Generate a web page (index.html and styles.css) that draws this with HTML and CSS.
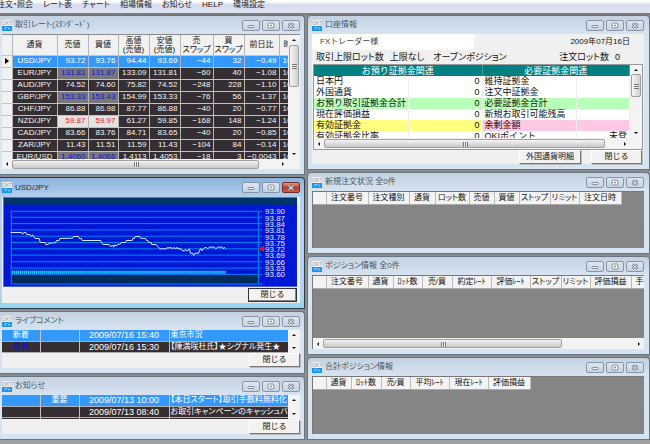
FILE: index.html
```html
<!DOCTYPE html>
<html lang="ja">
<head>
<meta charset="utf-8">
<title>FX取引</title>
<link rel="stylesheet" href="styles.css">
</head>
<body>
<svg width="0" height="0" class="defs" aria-hidden="true">
  <symbol id="logo" viewBox="0 0 10 11">
    <rect width="10" height="11" fill="#eef1f4"/>
    <text x="0" y="5" font-size="5" fill="#8c98a4" font-family="Liberation Sans">OKT</text>
    <rect y="6" width="10" height="5" fill="#1c93ea"/>
    <path d="M3 9.500V7.500H5M6 7.500L8 9.500M8 7.500L6 9.500" stroke="#bfe2fb" stroke-width=".8" fill="none"/>
  </symbol>
  <symbol id="min" viewBox="0 0 18 11"><rect x="5.500" y="5.500" width="7" height="2.500" rx="1" fill="#fff" stroke="#6f7780"/></symbol>
  <symbol id="max" viewBox="0 0 18 11"><rect x="5.500" y="2.500" width="7" height="6" rx="1" fill="#fff" stroke="#6f7780"/><rect x="8" y="4.500" width="2" height="2" fill="#6f7780"/></symbol>
  <symbol id="close" viewBox="0 0 18 11"><path d="M6 3l6 5.500M12 3l-6 5.500" stroke="#6f7780" stroke-width="3"/><path d="M6 3l6 5.500M12 3l-6 5.500" stroke="#fff" stroke-width="1.200"/></symbol>
</svg>
<nav class="menu">
  <a href="#">注文・照会</a><a href="#">レート表</a><a href="#">チャート</a><a href="#">相場情報</a><a href="#">お知らせ</a><a href="#">HELP</a><a href="#">環境設定</a>
</nav>
<main class="desktop">
  <div class="column left">
    <section class="window">
      <header class="title"><svg class="logo"><use href="#logo"/></svg><h2>取引レート(ｽﾀﾝﾀﾞｰﾄﾞ)</h2>
        <button class="ctl" aria-label="最小化"><svg><use href="#min"/></svg></button><button class="ctl" aria-label="最大化"><svg><use href="#max"/></svg></button><button class="ctl" aria-label="閉じる"><svg><use href="#close"/></svg></button></header>
      <div class="client rates">
        <div class="row">
          <div class="clip rates-view">
            <table class="rate-table">
              <colgroup><col class="w10"><col class="w45"><col class="w31"><col class="w30"><col class="w31"><col class="w31"><col class="w33"><col class="w31"><col class="w35"><col class="w31"></colgroup>
              <thead><tr><th></th><th>通貨</th><th>売値</th><th>買値</th><th>高値<br>(売値)</th><th>安値<br>(売値)</th><th>売<br>スワップ</th><th>買<br>スワップ</th><th>前日比</th><th class="start">時刻</th></tr></thead>
              <tbody>
                <tr class="selected"><th><i class="pointer"></i></th><td>USD/JPY</td><td>93.72</td><td>93.76</td><td>94.44</td><td>93.69</td><td>−44</td><td>32</td><td>−0.49</td><td>16:</td></tr>
                <tr><th></th><td>EUR/JPY</td><td class="down">131.81</td><td class="down">131.87</td><td>133.09</td><td>131.81</td><td>−60</td><td>40</td><td>−1.08</td><td>16:</td></tr>
                <tr><th></th><td>AUD/JPY</td><td>74.52</td><td>74.60</td><td>75.82</td><td>74.52</td><td>−248</td><td>228</td><td>−1.10</td><td>16:</td></tr>
                <tr><th></th><td>GBP/JPY</td><td class="down">153.33</td><td class="down">153.43</td><td>154.99</td><td>153.33</td><td>−76</td><td>56</td><td>−1.37</td><td>16:</td></tr>
                <tr><th></th><td>CHF/JPY</td><td>86.88</td><td>86.98</td><td>87.77</td><td>86.88</td><td>−40</td><td>20</td><td>−0.77</td><td>16:</td></tr>
                <tr><th></th><td>NZD/JPY</td><td class="up">59.87</td><td class="up">59.97</td><td>61.27</td><td>59.85</td><td>−168</td><td>148</td><td>−1.24</td><td>16:</td></tr>
                <tr><th></th><td>CAD/JPY</td><td>83.66</td><td>83.76</td><td>84.71</td><td>83.65</td><td>−40</td><td>20</td><td>−0.85</td><td>16:</td></tr>
                <tr><th></th><td>ZAR/JPY</td><td>11.43</td><td>11.51</td><td>11.59</td><td>11.43</td><td>−104</td><td>84</td><td>−0.14</td><td>16:</td></tr>
                <tr><th></th><td>EUR/USD</td><td class="down">1.4060</td><td class="down">1.4066</td><td>1.4113</td><td>1.4053</td><td>−18</td><td>3</td><td>−0.0043</td><td>16:</td></tr>
              </tbody>
            </table>
          </div>
          <div class="vbar"><i class="arrow up-arrow"></i><i class="thumb rates-thumb"></i><i class="arrow down-arrow"></i></div>
        </div>
        <div class="hbar with-grip"><i class="arrow left-arrow"></i><i class="track"><i class="thumb wide"></i></i><i class="arrow right-arrow"></i></div>
      </div>
    </section>

    <section class="window active">
      <header class="title"><svg class="logo"><use href="#logo"/></svg><h2>USD/JPY</h2>
        <button class="ctl" aria-label="最小化"><svg><use href="#min"/></svg></button><button class="ctl" aria-label="最大化"><svg><use href="#max"/></svg></button><button class="ctl red" aria-label="閉じる"><svg><use href="#close"/></svg></button></header>
      <div class="client">
        <svg class="chart" viewBox="9 66 885 270" role="img" aria-label="USD/JPY チャート">
          <defs><pattern id="ticks" width="6" height="10" patternUnits="userSpaceOnUse"><rect width="3" height="10" fill="#29cfff"/></pattern></defs>
          <rect x="9" y="66" width="885" height="270" fill="#0018d6"/>
          <rect x="9" y="69" width="885" height="20" fill="#003366"/>
          <rect x="34" y="300" width="744" height="28" fill="#002c5c"/>
          <path d="M32 109H789M32 127H789M32 146H789M32 165H789M32 184H789M32 203H789M32 222H789M32 241H789M32 261H789M32 280H789M32 299H789M32 328H789M34 109V328M778 109V328" stroke="#0484f4" stroke-width="3" fill="none"/>
          <rect x="34" y="288" width="646" height="9" fill="#0878ea"/><rect x="34" y="288" width="646" height="9" fill="url(#ticks)"/>
          <polyline fill="none" stroke="#dfe3ff" stroke-width="3" points="32,173 65,173 68,178 71,173 78,173 80,179 90,179 94,184 99,180 102,186 106,191 118,191 121,203 135,203 138,209 145,209 148,204 156,206 158,204 167,204 170,197 178,197 180,191 218,190 221,185 236,185 238,191 245,191 247,197 303,197 306,203 310,209 328,209 332,215 340,211 342,217 346,210 350,214 353,209 362,208 365,203 378,203 380,197 398,197 400,190 405,191 407,185 420,185 423,190 438,191 441,197 445,197 448,203 455,203 457,209 470,209 474,215 482,222 500,222 502,219 518,219 520,222 523,218 530,222 533,217 536,222 545,222 549,228 556,228 558,224 563,229 570,222 573,235 580,235 583,242 587,235 598,235 602,223 606,222 608,228 612,222 620,217 625,222 630,217 645,217 650,222 655,217 668,217 672,222 675,217 680,222"/>
          <path d="M778 222L795 213V231Z" fill="#f01010"/>
          <g class="prices"><text x="798" y="118">93.90</text><text x="798" y="137">93.87</text><text x="798" y="156">93.84</text><text x="798" y="175">93.81</text><text x="798" y="194">93.78</text><text x="798" y="213">93.75</text><text x="798" y="232">93.72</text><text x="798" y="251">93.69</text><text x="798" y="270">93.66</text><text x="798" y="289">93.63</text><text x="798" y="308">93.60</text></g>
          <path d="M10.500 336V67.500H894" fill="none" stroke="#777" stroke-width="3"/>
        </svg>
        <div class="actions"><button class="btn default">閉じる</button></div>
      </div>
    </section>

    <section class="window">
      <header class="title"><svg class="logo"><use href="#logo"/></svg><h2>ライブコメント</h2>
        <button class="ctl" aria-label="最小化"><svg><use href="#min"/></svg></button><button class="ctl" aria-label="最大化"><svg><use href="#max"/></svg></button><button class="ctl" aria-label="閉じる"><svg><use href="#close"/></svg></button></header>
      <div class="client comments">
        <div class="row">
          <div class="clip">
            <table class="news">
              <colgroup><col class="w38"><col class="w39"><col class="w90"><col></colgroup>
              <tbody>
                <tr class="selected"><td>新着</td><td></td><td>2009/07/16 15:40</td><td>東京市況</td></tr>
                <tr><td class="fresh">新着</td><td></td><td>2009/07/16 15:30</td><td>【陳満咲杜氏】★シグナル発生★</td></tr>
              </tbody>
            </table>
          </div>
          <div class="vbar"><i class="arrow up-arrow"></i><i class="arrow down-arrow"></i></div>
        </div>
        <div class="actions"><button class="btn">閉じる</button></div>
      </div>
    </section>

    <section class="window">
      <header class="title"><svg class="logo"><use href="#logo"/></svg><h2>お知らせ</h2>
        <button class="ctl" aria-label="最小化"><svg><use href="#min"/></svg></button><button class="ctl" aria-label="最大化"><svg><use href="#max"/></svg></button><button class="ctl" aria-label="閉じる"><svg><use href="#close"/></svg></button></header>
      <div class="client notices">
        <div class="row">
          <div class="clip notice-view">
            <table class="news">
              <colgroup><col class="w38"><col class="w39"><col class="w90"><col></colgroup>
              <tbody>
                <tr class="selected"><td></td><td>重要</td><td>2009/07/13 10:00</td><td>【本日スタート】取引手数料無料化</td></tr>
                <tr><td></td><td></td><td>2009/07/13 08:40</td><td>お取引キャンペーンのキャッシュバック</td></tr>
                <tr><td></td><td></td><td></td><td></td></tr>
              </tbody>
            </table>
          </div>
          <div class="vbar"><i class="arrow up-arrow"></i><i class="arrow down-arrow"></i></div>
        </div>
        <div class="actions"><button class="btn">閉じる</button></div>
      </div>
    </section>
  </div>

  <div class="column right">
    <section class="window">
      <header class="title"><svg class="logo"><use href="#logo"/></svg><h2>口座情報</h2>
        <button class="ctl" aria-label="最小化"><svg><use href="#min"/></svg></button><button class="ctl" aria-label="最大化"><svg><use href="#max"/></svg></button><button class="ctl" aria-label="閉じる"><svg><use href="#close"/></svg></button></header>
      <div class="client account">
        <div class="owner"><span class="name">FXトレーダー様</span><span class="date">2009年07月16日</span></div>
        <div class="limits"><span>取引上限ロット数</span><span>上限なし</span><span class="open">オープンポジション</span><span class="lots">注文ロット数</span><span>0</span></div>
        <div class="margin-box">
          <div class="row">
            <div class="clip margin-view">
              <table class="margin">
                <colgroup><col class="w94"><col class="w74"><col class="w94"><col></colgroup>
                <thead><tr><th colspan="2">お預り証拠金関連</th><th colspan="2">必要証拠金関連</th></tr></thead>
                <tbody>
                  <tr><td>日本円</td><td>0</td><td>維持証拠金</td><td></td></tr>
                  <tr><td>外国通貨</td><td>0</td><td>注文中証拠金</td><td></td></tr>
                  <tr class="green"><td>お預り取引証拠金合計</td><td>0</td><td>必要証拠金合計</td><td></td></tr>
                  <tr><td>現在評価損益</td><td>0</td><td>新規お取引可能残高</td><td></td></tr>
                  <tr><td class="yellow">有効証拠金</td><td class="yellow">0</td><td class="pink">余剰金額</td><td class="pink"></td></tr>
                  <tr><td>有効証拠金比率</td><td>0</td><td>OKIポイント</td><td>未登</td></tr>
                </tbody>
              </table>
            </div>
            <div class="vbar"><i class="arrow up-arrow"></i><i class="thumb margin-thumb"></i><i class="arrow down-arrow"></i></div>
          </div>
          <div class="hbar with-grip"><i class="arrow left-arrow"></i><i class="track"><i class="thumb wider"></i></i><i class="arrow right-arrow"></i></div>
        </div>
        <div class="actions"><button class="btn long">外国通貨明細</button><button class="btn">閉じる</button></div>
      </div>
    </section>

    <section class="window">
      <header class="title"><svg class="logo"><use href="#logo"/></svg><h2>新規注文状況 全0件</h2>
        <button class="ctl" aria-label="最小化"><svg><use href="#min"/></svg></button><button class="ctl" aria-label="最大化"><svg><use href="#max"/></svg></button><button class="ctl" aria-label="閉じる"><svg><use href="#close"/></svg></button></header>
      <div class="client sheet orders">
        <div class="clip grow">
          <table class="heads">
            <thead><tr><th class="w13"></th><th class="w42">注文番号</th><th class="w41">注文種別</th><th class="w26">通貨</th><th class="w34">ロット数</th><th class="w25">売値</th><th class="w25">買値</th><th class="w31">ストップ</th><th class="w29">リミット</th><th class="w42">注文日時</th></tr></thead>
          </table>
        </div>
      </div>
    </section>

    <section class="window">
      <header class="title"><svg class="logo"><use href="#logo"/></svg><h2>ポジション情報 全0件</h2>
        <button class="ctl" aria-label="最小化"><svg><use href="#min"/></svg></button><button class="ctl" aria-label="最大化"><svg><use href="#max"/></svg></button><button class="ctl" aria-label="閉じる"><svg><use href="#close"/></svg></button></header>
      <div class="client sheet positions">
        <div class="clip grow">
          <table class="heads">
            <thead><tr><th class="w13"></th><th class="w42">注文番号</th><th class="w25">通貨</th><th class="w29">ﾛｯﾄ数</th><th class="w30">売/買</th><th class="w39">約定ﾚｰﾄ</th><th class="w39">評価ﾚｰﾄ</th><th class="w31">ストップ</th><th class="w29">リミット</th><th class="w41">評価損益</th><th class="w41 start">手数料</th></tr></thead>
          </table>
        </div>
        <div class="hbar"><i class="arrow left-arrow"></i><i class="track"><i class="thumb mid"></i></i><i class="arrow right-arrow"></i></div>
      </div>
    </section>

    <section class="window">
      <header class="title"><svg class="logo"><use href="#logo"/></svg><h2>合計ポジション情報</h2>
        <button class="ctl" aria-label="最小化"><svg><use href="#min"/></svg></button><button class="ctl" aria-label="最大化"><svg><use href="#max"/></svg></button><button class="ctl" aria-label="閉じる"><svg><use href="#close"/></svg></button></header>
      <div class="client sheet totals">
        <div class="clip grow">
          <table class="heads">
            <thead><tr><th class="w13"></th><th class="w25">通貨</th><th class="w30">ﾛｯﾄ数</th><th class="w29">売/買</th><th class="w39">平均ﾚｰﾄ</th><th class="w39">現在ﾚｰﾄ</th><th class="w42">評価損益</th></tr></thead>
          </table>
        </div>
      </div>
    </section>
  </div>
</main>
</body>
</html>
```
FILE: styles.css
```css
* { box-sizing: border-box; }
body {
  margin: 0;
  min-height: 100vh;
  background: #a0a0a0;
  color: #111;
  font-family: "Liberation Sans", "Noto Sans CJK JP", sans-serif;
  font-size: 8px;
  line-height: 10px;
  overflow: hidden;
}
.defs { position: absolute; }
h2 { margin: 0; font: inherit; }
button { font: inherit; color: inherit; padding: 0; }
table { border-collapse: collapse; table-layout: fixed; width: 100%; }
th, td { padding: 0; font-weight: normal; white-space: nowrap; overflow: hidden; }
i { display: block; }

/* menu bar */
.menu {
  display: flex;
  gap: 10px;
  height: 13px;
  margin-left: -3px;
  background: linear-gradient(#fff 0, #f4f6fc 3px, #d5dcee 4px, #dde3f3);
  font-feature-settings: "palt";
}
.menu a { color: #222; text-decoration: none; white-space: nowrap; }

/* windows */
.desktop {
  display: grid;
  grid-template-columns: minmax(0, 305fr) minmax(0, 343fr);
  gap: 2px;
  border-top: 2px solid #7b7b7b;
  background: #8c8c8c;
}
.column { display: flex; flex-direction: column; gap: 2px; }
.window {
  border: 1px solid #687684;
  border-radius: 4px 4px 0 0;
  background: linear-gradient(#c3d1e1, #d8e4f1 19px, #d5e4f2);
  padding: 0 5px 5px 4px;
}
.left .window { border-left: 0; border-top-left-radius: 0; padding: 0 4px 5px 2px; }
.window.active { background: linear-gradient(#8cb2dc, #b5d0ec 20px, #b9d3ee 90%, #8fd6ee); border-color: #2b3c4c; }
.title { display: flex; align-items: center; gap: 2px; height: 18px; color: #4a5660; }
.active .title { height: 19px; color: #1c2c3c; }
.logo { width: 10px; height: 11px; flex: none; margin-right: 1px; }
.title h2 { flex: 1; white-space: nowrap; font-feature-settings: "palt"; }
.ctl { width: 18px; height: 11px; border: 1px solid #8795a6; border-radius: 2px; background: linear-gradient(#dce6f2, #c5d3e3); display: flex; }
.ctl svg { width: 100%; height: 9px; }
.ctl.red { background: linear-gradient(#e09a8c, #bb3a2a 50%, #cf5a48); border-color: #702e28; }
.client { background: #f0f0f0; display: flex; flex-direction: column; }
.row { display: flex; }
.clip { flex: 1; min-width: 0; overflow: hidden; }
.grow { flex: 1; }

/* column widths */
.w10 { width: 10px; } .w13 { width: 13px; } .w25 { width: 25px; } .w26 { width: 26px; }
.w29 { width: 29px; } .w30 { width: 30px; } .w31 { width: 31px; } .w33 { width: 33px; }
.w34 { width: 34px; } .w35 { width: 35px; } .w38 { width: 38px; } .w39 { width: 39px; }
.w41 { width: 41px; } .w42 { width: 42px; } .w45 { width: 45px; } .w74 { width: 74px; }
.w90 { width: 90px; } .w94 { width: 94px; }

/* rate list */
.rates { height: 135px; border-top: 1px solid #8a8a8a; }
.rates-view { height: 124px; background: #888; }
.rate-table { width: 308px; }
.rate-table th { background: #f1f1f1; border-right: 1px solid #b5b5b5; border-bottom: 1px solid #c4c4c4; }
.rate-table thead th { height: 20px; line-height: 9px; text-align: center; font-feature-settings: "palt"; }
.rate-table td {
  height: 12px;
  padding-right: 2px;
  background: #352e33;
  color: #f4f4f4;
  border-right: 1px solid #b4b4b4;
  border-bottom: 1px solid #c2c2c2;
  text-align: right;
}
.rate-table td:nth-child(2) { text-align: center; padding: 0; }
.rate-table td:last-child { text-align: left; padding-left: 3px; }
.rate-table thead .start, .heads .start { text-align: left; padding-left: 4px; }
.rate-table td.down { background: #777; color: #1414dc; }
.rate-table td.up { background: #e4e4e4; color: #f01c2c; }
.rate-table .selected td { background: #3399ff; color: #fff; }
.pointer { width: 0; height: 0; margin-left: 3px; border: 3px solid transparent; border-left: 4px solid #000; border-right: 0; }

/* scroll bars */
.vbar { width: 12px; flex: none; display: flex; flex-direction: column; align-items: center; background: #f3f3f3; padding: 4px 0; }
.vbar .down-arrow { margin-top: auto; }
.vbar .thumb { width: 10px; background: linear-gradient(90deg, #f6f6f6, #d0d0d0); position: relative; }
.rates-thumb { height: 42px; margin-top: 4px; }
.margin-thumb { height: 23px; margin-top: 3px; }
.thumb { border: 1px solid #a0a0a0; border-radius: 2px; }
.thumb::after { content: ""; position: absolute; left: 50%; top: 50%; width: 5px; height: 5px; margin: -2px; background: repeating-linear-gradient(90deg, #777 0 1px, #eee 1px 2px); }
.vbar .thumb::after { background: repeating-linear-gradient(#777 0 1px, #eee 1px 2px); }
.hbar { display: flex; align-items: center; gap: 4px; height: 11px; padding: 0 4px; background: #f3f3f3; }
.hbar.with-grip { padding-right: 16px; }
.track { flex: 1; height: 9px; }
.hbar .thumb { height: 9px; position: relative; background: linear-gradient(#f5f5f5, #ddd 50%, #c8c8c8); }
.wide { width: 93%; } .wider { width: 95%; } .mid { width: 77%; }
.arrow { width: 0; height: 0; border: 2px solid transparent; flex: none; }
.up-arrow { border-top: 0; border-bottom-color: #111; }
.down-arrow { border-bottom: 0; border-top-color: #111; }
.left-arrow { border-left: 0; border-right-color: #111; }
.right-arrow { border-right: 0; border-left-color: #111; }

/* buttons */
.actions { display: flex; justify-content: flex-end; align-items: center; gap: 10px; flex: 1; }
.btn { width: 51px; height: 14px; line-height: 10px; background: #f2f2f2; border: 1px solid; border-color: #fff #777 #777 #fff; box-shadow: 1px 1px #bbb; }
.btn.long { width: 62px; }
.btn.default { width: 49px; border: 1px solid #333; box-shadow: inset -1px -1px #888; }

/* chart */
.active .client { padding: 0 3px 0 1px; min-height: 106px; }
.chart { display: block; width: 100%; }
.prices { font-size: 24px; fill: #e3e6ff; }

/* comments and notices */
.comments { height: 38px; }
.notices { height: 39px; }
.notice-view { height: 24px; }
.news td { height: 11px; background: #352e33; color: #fff; border-right: 1px solid #c2c2c2; border-bottom: 1px solid #b0b0b0; text-align: center; }
.news td:nth-child(3) { font-size: 9px; }
.news td:last-child { text-align: left; padding-left: 1px; border-right: 0; font-feature-settings: "palt"; }
.news .selected td { background: #3399ff; }
.news td.fresh { color: #1010e0; }

/* account */
.account { height: 130px; font-size: 9px; }
.left .window, .account .btn, .owner { font-size: 8px; }
.owner { display: flex; justify-content: space-between; align-items: center; height: 16px; padding-right: 14px; }
.name { width: 51%; height: 16px; line-height: 15px; padding-left: 8px; background: #fff; color: #444; }
.limits { display: flex; align-items: center; height: 14px; padding: 0 24px 0 4px; gap: 6px; white-space: nowrap; font-feature-settings: "palt"; }
.open { margin-left: 3px; }
.lots { margin-left: auto; }
.margin-box { margin: 0 1px; border: 1px solid #999; }
.margin-view { height: 73px; background: #fff; }
.margin th { height: 11px; background: #008080; color: #fff; border-right: 1px solid #4a9c9c; }
.margin td { height: 11px; padding: 0 2px; border-right: 1px solid #eee; line-height: 11px; }
.margin td:nth-child(even) { text-align: right; }
.green td { background: #b8ffb8; }
.margin .yellow { background: #ffff80; }
.margin .pink { background: #ffc8e4; }
.account .actions { padding-right: 2px; }

/* order and position sheets */
.sheet { background: #858585; border-top: 1px solid #777; border-left: 1px solid #777; }
.orders { height: 57px; }
.positions { height: 74px; }
.totals { height: 58px; }
.heads { width: max-content; table-layout: fixed; }
.heads th { height: 12px; background: #f3f3f3; border-right: 1px solid #bbb; border-bottom: 1px solid #aaa; text-align: center; font-feature-settings: "palt"; }
```
